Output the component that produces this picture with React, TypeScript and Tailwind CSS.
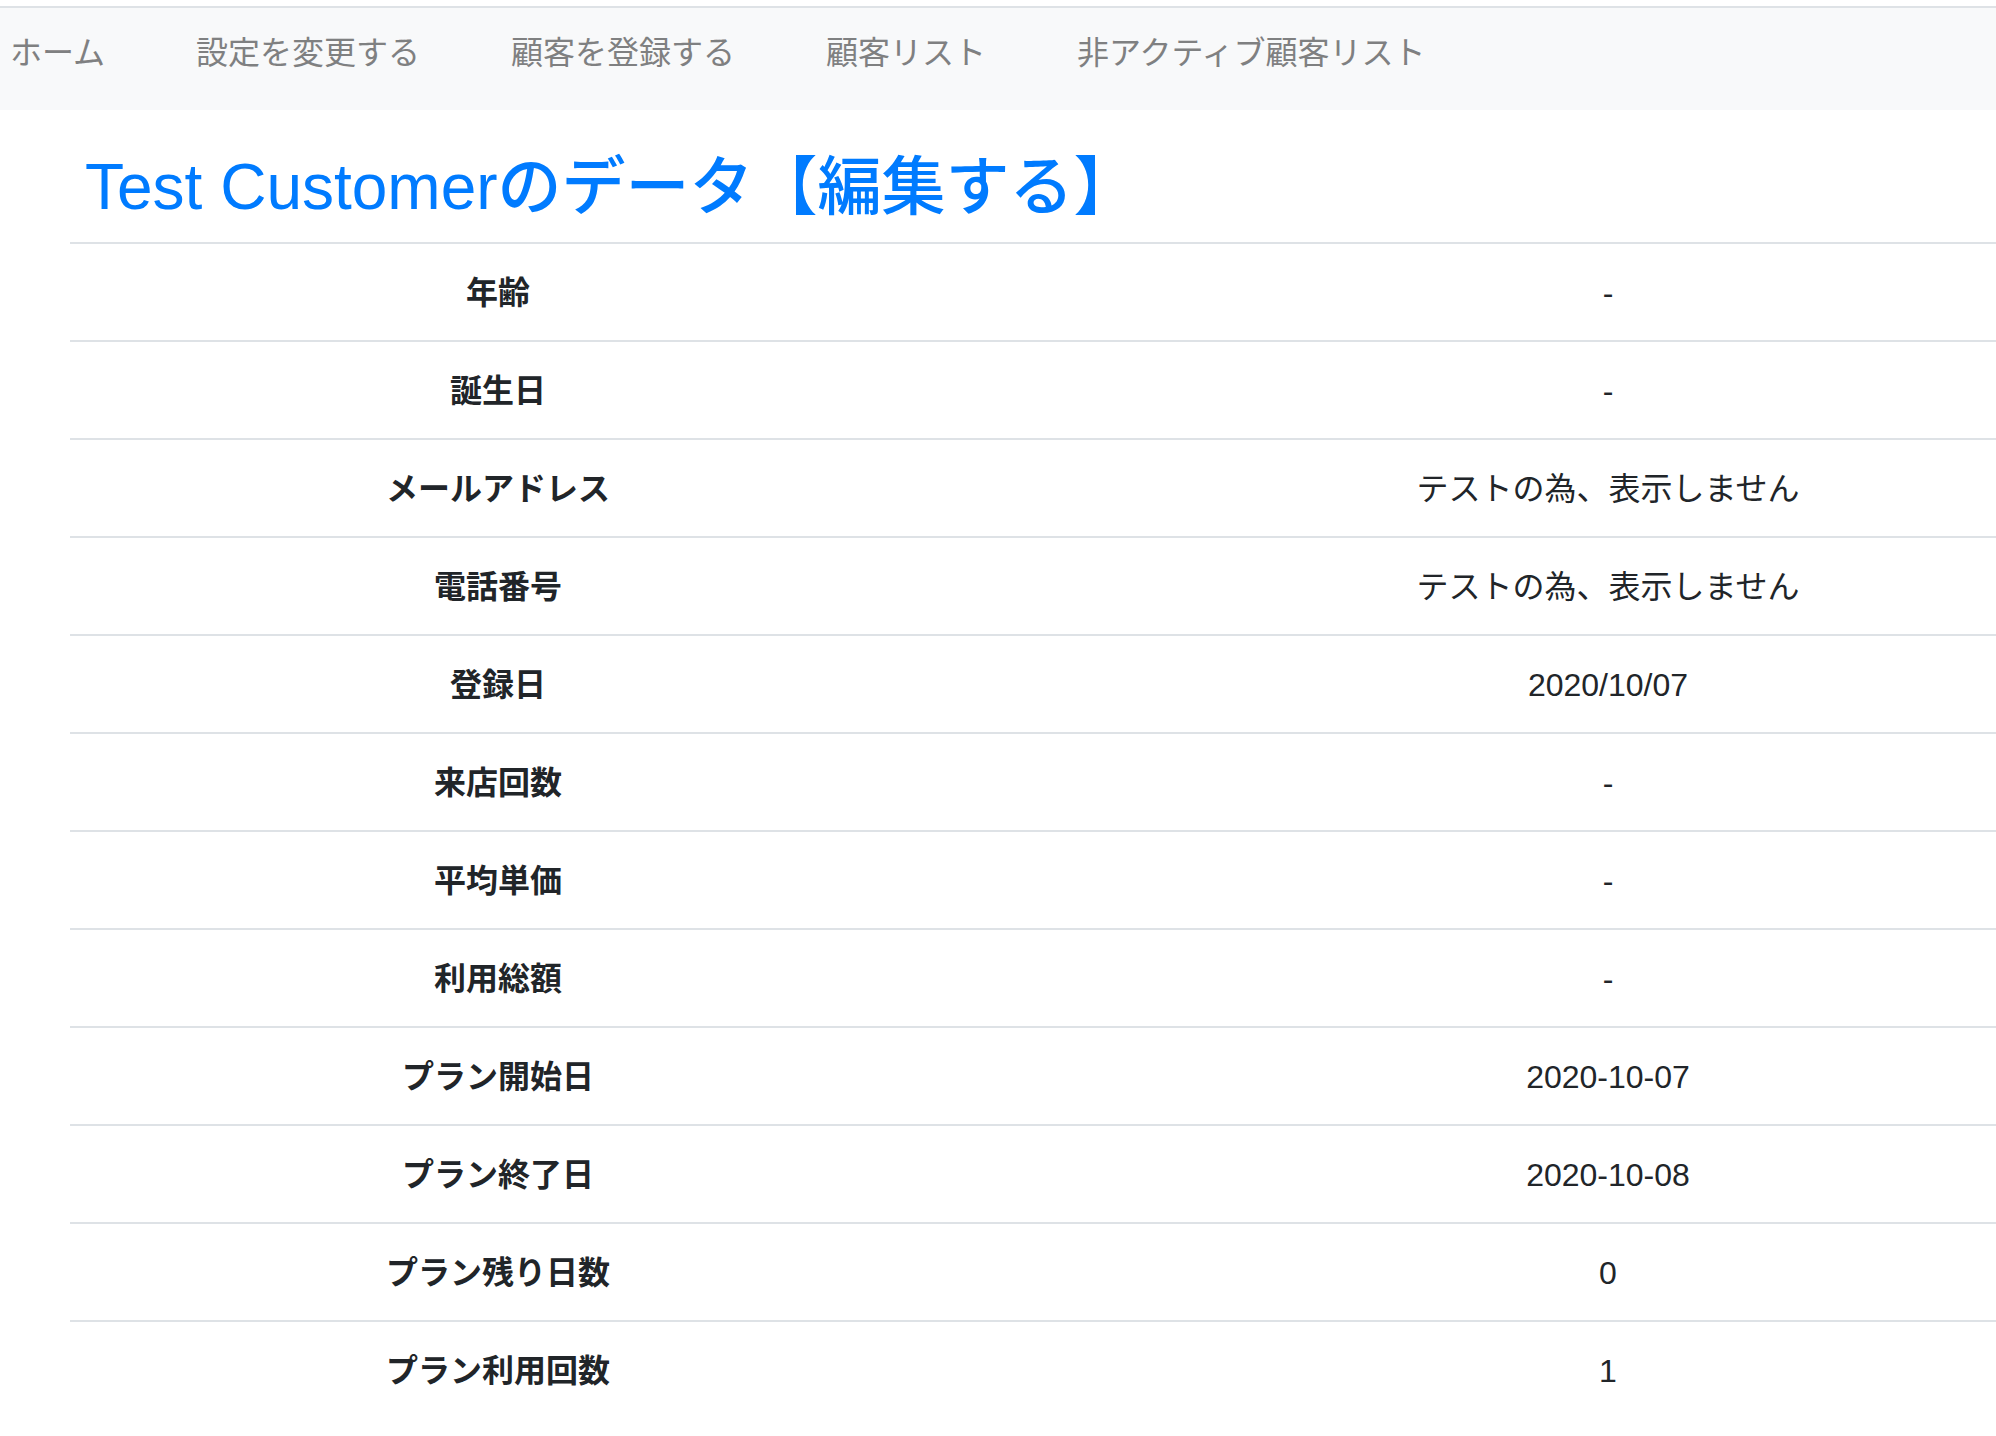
import React from "react";

const navItems: string[] = [
  "ホーム",
  "設定を変更する",
  "顧客を登録する",
  "顧客リスト",
  "非アクティブ顧客リスト",
];

const rows: { label: string; value: string }[] = [
  { label: "年齢", value: "-" },
  { label: "誕生日", value: "-" },
  { label: "メールアドレス", value: "テストの為、表示しません" },
  { label: "電話番号", value: "テストの為、表示しません" },
  { label: "登録日", value: "2020/10/07" },
  { label: "来店回数", value: "-" },
  { label: "平均単価", value: "-" },
  { label: "利用総額", value: "-" },
  { label: "プラン開始日", value: "2020-10-07" },
  { label: "プラン終了日", value: "2020-10-08" },
  { label: "プラン残り日数", value: "0" },
  { label: "プラン利用回数", value: "1" },
];

const App: React.FC = () => {
  return (
    <div className="w-[1996px] h-[1436px] overflow-hidden bg-white font-['Liberation_Sans','Noto_Sans_CJK_JP',sans-serif] text-[#212529]">
      {/* Navbar */}
      <div className="mt-[6px] border-t-2 border-[#dee2e6]">
        <nav className="h-[102px] bg-[#f8f9fa] flex items-center pl-[10px] pb-[12px] gap-[91px] text-[32px] text-[#7f8081]">
          {navItems.map((item) => (
            <a key={item} href="#" className="leading-none">
              {item}
            </a>
          ))}
        </nav>
      </div>

      {/* Main */}
      <main className="pl-[70px]">
        <h2 className="mt-[39px] mb-[16px] ml-[15px] text-[64px] leading-[1.2] text-[#007bff] font-medium">
          Test Customerのデータ【編集する】
        </h2>
        <table className="w-[2220px] border-collapse text-[32px]">
          <tbody>
            {rows.map((row) => (
              <tr key={row.label} className="border-t-2 border-[#dee2e6]">
                <th className="w-[856px] h-[98px] pt-[2px] text-center font-bold">
                  {row.label}
                </th>
                <td className="h-[98px] pt-[2px] text-center">{row.value}</td>
              </tr>
            ))}
          </tbody>
        </table>
      </main>
    </div>
  );
};

export default App;
